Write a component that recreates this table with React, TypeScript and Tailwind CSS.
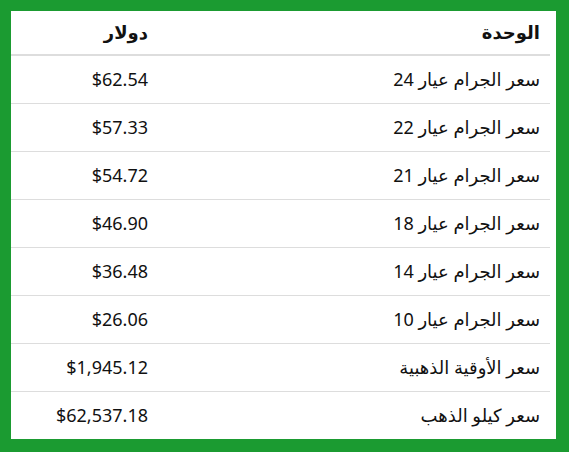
const rows: [string, string][] = [
  ["سعر الجرام عيار 24", "$62.54"],
  ["سعر الجرام عيار 22", "$57.33"],
  ["سعر الجرام عيار 21", "$54.72"],
  ["سعر الجرام عيار 18", "$46.90"],
  ["سعر الجرام عيار 14", "$36.48"],
  ["سعر الجرام عيار 10", "$26.06"],
  ["سعر الأوقية الذهبية", "$1,945.12"],
  ["سعر كيلو الذهب", "$62,537.18"],
];

export default function App() {
  return (
    <div className="w-[569px] h-[452px] bg-[#1b9b31] pt-[11px] pl-[11px] pr-[13px] pb-[13px]">
      <div
        dir="rtl"
        className="h-full bg-white pr-[6px] overflow-hidden text-[18px] text-[#111] font-['Noto_Sans','DejaVu_Sans',sans-serif]"
      >
        <table className="w-full border-collapse">
          <thead>
            <tr className="h-[44px] border-b-2 border-[#dddddd]">
              <th className="text-right font-bold px-[10px] align-middle">الوحدة</th>
              <th className="text-right font-bold px-[10px] align-middle w-[147px]">دولار</th>
            </tr>
          </thead>
          <tbody>
            {rows.map(([label, price]) => (
              <tr key={label} className="h-[48px] border-b border-[#dddddd]">
                <td className="text-right px-[10px] align-middle">{label}</td>
                <td className="text-right px-[10px] align-middle" dir="ltr">
                  <span className="block text-right">{price}</span>
                </td>
              </tr>
            ))}
          </tbody>
        </table>
      </div>
    </div>
  );
}
